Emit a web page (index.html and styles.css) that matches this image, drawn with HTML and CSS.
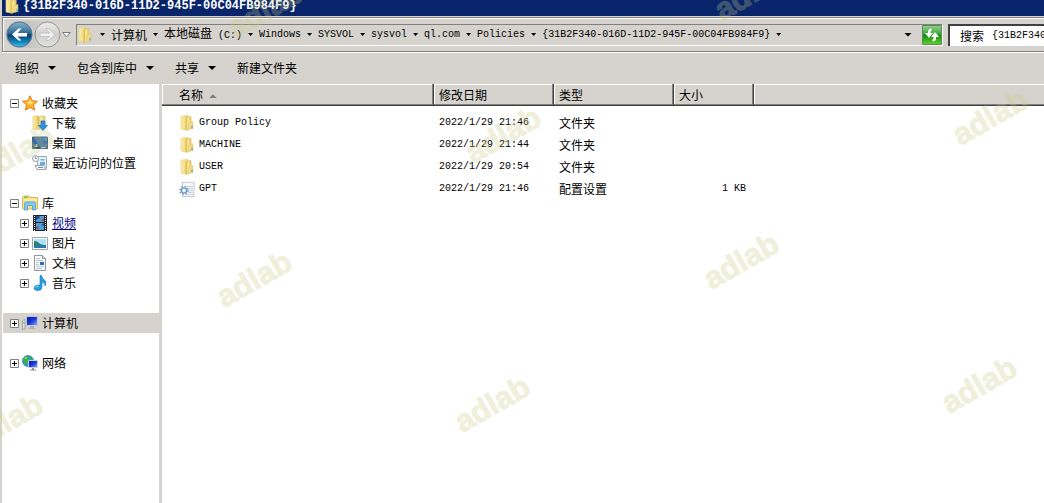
FILE: index.html
```html
<!DOCTYPE html>
<html lang="zh-CN">
<head>
<meta charset="utf-8">
<title>{31B2F340-016D-11D2-945F-00C04FB984F9}</title>
<link rel="stylesheet" href="styles.css">
</head>
<body>
<svg class="defs" aria-hidden="true">
  <defs>
    <linearGradient id="gFolder" x1="0" x2="1"><stop offset="0" stop-color="#fbefaa"/><stop offset="1" stop-color="#ecd06a"/></linearGradient>
    <linearGradient id="gFolder2" x1="0" x2="1"><stop offset="0" stop-color="#d9b548"/><stop offset=".4" stop-color="#fbeea6"/><stop offset="1" stop-color="#ead070"/></linearGradient>
    <linearGradient id="gBack" x1="0" x2="0" y1="0" y2="1"><stop offset="0" stop-color="#8ab4cc"/><stop offset=".45" stop-color="#2d6a94"/><stop offset=".52" stop-color="#0b3f6c"/><stop offset=".8" stop-color="#1484bd"/><stop offset="1" stop-color="#37c6f0"/></linearGradient>
    <linearGradient id="gFwd" x1="0" x2="0" y1="0" y2="1"><stop offset="0" stop-color="#eeeeee"/><stop offset=".5" stop-color="#cfcfcf"/><stop offset="1" stop-color="#e2e2e2"/></linearGradient>
    <linearGradient id="gGreen" x1="0" x2="0" y1="0" y2="1"><stop offset="0" stop-color="#8fd08a"/><stop offset=".45" stop-color="#3fa63b"/><stop offset=".5" stop-color="#118a10"/><stop offset="1" stop-color="#5fd52c"/></linearGradient>
    <linearGradient id="gScreen" x1="0" x2="1" y1="0" y2="1"><stop offset="0" stop-color="#0717a8"/><stop offset=".5" stop-color="#1638d8"/><stop offset="1" stop-color="#8fb4ff"/></linearGradient>
    <linearGradient id="gDesk" x1="0" x2="1" y1="1" y2="0"><stop offset="0" stop-color="#2c6cb8"/><stop offset=".6" stop-color="#3c6da4"/><stop offset="1" stop-color="#7fa8cf"/></linearGradient>
    <symbol id="folder" viewBox="0 0 16 16">
      <path d="M2 1.200 7 .5h2V13l-2 2-5-1z" fill="url(#gFolder)" stroke="#e8d27c" stroke-width=".6"/>
      <path d="M7 3 11.500 1.200V12L8 15.700l-1-.7z" fill="url(#gFolder2)" stroke="#d3ad48" stroke-width=".5"/>
      <path d="M9.500 8l4.500-1.500v7L9.500 14.700z" fill="#f3dc84" stroke="#dfc062" stroke-width=".5"/>
      <path d="M11.500 2v5" stroke="#e7cd70" stroke-width="2"/>
      <path d="M13 10.500v3" stroke="#3ea4dc"/>
    </symbol>
    <symbol id="star" viewBox="0 0 16 16">
      <path d="M8 .8l2.200 4.900 5.200.6-3.900 3.500 1.100 5.300L8 12.400l-4.600 2.700 1.100-5.300L.6 6.300l5.200-.6z" fill="#ffb22e" stroke="#e8730c"/>
      <path d="M8 3l1.400 3.500 3.600.5-5 2.500-4.500-2.500 3.200-.5z" fill="#ffdf7a"/>
    </symbol>
    <symbol id="download" viewBox="0 0 16 16">
      <path d="M1 1.500 6 .5v14l-5-.5z" fill="url(#gFolder)" stroke="#e0c368" stroke-width=".6"/>
      <path d="M6 2l5-1.300 2 1V13l-6 2z" fill="url(#gFolder2)" stroke="#d3ad48" stroke-width=".6"/>
      <path d="M9 6h4v4.500h2.500L11 15.500 6.500 10.500H9z" fill="#2f93e4" stroke="#1769b5" stroke-width=".7"/>
    </symbol>
    <symbol id="desktop" viewBox="0 0 16 16">
      <path d="M.5 2h15v11.500H.5z" fill="url(#gDesk)" stroke="#4b5f78"/>
      <path d="M1 12h14v1H1z" fill="#334b68"/><path d="M9 12h5v1H9z" fill="#a9c3de"/>
      <path d="M2.500 9H4v1.500H2.500z" fill="#e9622b"/><path d="M4 9h1.500v1.500H4z" fill="#82cf3a"/><path d="M2.500 10.500H4V12H2.500z" fill="#54b9f5"/><path d="M4 10.500h1.500V12H4z" fill="#ffd83d"/>
    </symbol>
    <symbol id="recent" viewBox="0 0 16 16">
      <path d="M5.500 1.500h9v12h-9z" fill="#e9eef2" stroke="#a2abb3"/>
      <path d="M8.500 4h4v1.500h-4zM8 7h5v3H8z" fill="#58b3e8"/>
      <path d="M3 10.500h9l2 4H5z" fill="#f4f6f8" stroke="#9aa3ab"/>
      <path d="M6 12.500h5" stroke="#7d868e"/>
      <circle cx="3.500" cy="3.500" r="3" fill="#fafcfd" stroke="#9299a1"/>
      <path d="M3.500 1.500v2H5" fill="none" stroke="#4e6b8a" stroke-width=".8"/>
    </symbol>
    <symbol id="library" viewBox="0 0 16 16">
      <path d="M.5 2.500 1.500 1H7l1 1.500h7.500V14H.5z" fill="#f6e08a" stroke="#dbb95c"/>
      <path d="M2 2.200h4" stroke="#43b548"/><path d="M1 5h14" stroke="#fff4bd"/>
      <path d="M2.500 8.500Q2.500 7 4 7h8q1.500 0 1.500 1.500V15h-3v-4.500h-5V15h-3z" fill="#82c9ef" stroke="#4a9ed2" stroke-width=".8"/>
    </symbol>
    <symbol id="video" viewBox="0 0 16 16">
      <path d="M1 0h14v16H1z" fill="#20262c"/>
      <path d="M4 1h8v6H4zM4 8h8v7H4z" fill="#4e9ed8"/>
      <path d="M4 1h3l1 2-4 2zM9 10l3-2v3z" fill="#284a91"/><path d="M9 5l3-2v3H9zM4 12l2-1 1 3H4z" fill="#b34b3e"/>
      <path d="M2.500 1v15M13.500 1v15" stroke="#eef2f4" stroke-dasharray="1 1"/>
    </symbol>
    <symbol id="picture" viewBox="0 0 16 16">
      <path d="M.5 2.500h15v12H.5z" fill="#fff" stroke="#9aa4ab"/>
      <path d="M2 4h12v9H2z" fill="#aee1f7"/><path d="M2 6q3 0 5 2t7 2v3H2z" fill="#24806f"/><path d="M2 10.500h12V13H2z" fill="#2c78b5"/>
    </symbol>
    <symbol id="document" viewBox="0 0 16 16">
      <path d="M2.500.5h8l3 3v12h-11z" fill="#fff" stroke="#8c97a4"/>
      <path d="M10.500.5v3h3" fill="#dce5ef" stroke="#8c97a4"/>
      <path d="M4 3.500h4M4 5.500h7M4 7.500h3M4 9.500h3M4 11.500h8M4 13.500h6" stroke="#b4c2d5"/>
      <path d="M8 7h4v3H8z" fill="#2c68c4"/>
    </symbol>
    <symbol id="music" viewBox="0 0 16 16">
      <path d="M8 .5h1.500q.5 3 3 4.500 2.500 2 .5 6 .3-3-3-4V12q0 3.500-4 3.500-4 0-4-2.500 0-3 6-3z" fill="#279de2" stroke="#1377bd" stroke-width=".6"/>
      <path d="M3.500 12.500q1-1.200 3-1" fill="none" stroke="#95dcfa"/>
    </symbol>
    <symbol id="computer" viewBox="0 0 16 16">
      <path d="M.5 5.500 3 4.500V14l-2.500.5z" fill="#e6e6e2" stroke="#8a8a86" stroke-width=".7"/><path d="M1 8h1.500" stroke="#43c23b"/>
      <path d="M4.500 1.500h11v9h-11z" fill="url(#gScreen)" stroke="#c8c8d2"/>
      <path d="M8 11h4v1.500l2 1.500H6l2-1.500z" fill="#aeb0b4"/>
    </symbol>
    <symbol id="network" viewBox="0 0 16 16">
      <circle cx="6" cy="6" r="5.500" fill="#2c9ce0" stroke="#1663a6" stroke-width=".6"/>
      <path d="M1 4q2-3 5-3l1 2-2 2 1 2-3 3-1-3zM8 1l3 3-2 2-1-2z" fill="#37b52e"/><path d="M3 3.500 5 2.500" stroke="#dff7c0"/>
      <path d="M6.500 5.500h9v7h-9z" fill="url(#gScreen)" stroke="#c8cfe0"/>
      <path d="M10 13h2v1.500h2v1H8v-1h2z" fill="#8b9199"/>
    </symbol>
    <symbol id="config" viewBox="0 0 16 16">
      <path d="M3.500 1v14.500h11.500V1l-1.500 1L12 1l-1.500 1L9 1 7.500 2 6 1 5 2z" fill="#fafbfc" stroke="#b4bac4" stroke-width=".8"/>
      <path d="M7 5.500h7M9 7.500h5M9 9.500h5M9 11.500h5M7 13.500h7" stroke="#c6cfdc"/>
      <circle cx="5" cy="9.500" r="4" fill="none" stroke="#7ba3c7" stroke-width="1.600" stroke-dasharray="1.600 1.540"/>
      <circle cx="5" cy="9.500" r="2.600" fill="#eef5fa" stroke="#6c99c1" stroke-width="1.400"/>
    </symbol>
    <symbol id="plus" viewBox="0 0 9 9"><path d="M.5.5h8v8h-8z" fill="#fff" stroke="#808080"/><path d="M2 4.500h5M4.500 2v5" stroke="#000"/></symbol>
    <symbol id="minus" viewBox="0 0 9 9"><path d="M.5.5h8v8h-8z" fill="#fff" stroke="#808080"/><path d="M2 4.500h5" stroke="#000"/></symbol>
  </defs>
</svg>

<div class="window">
  <header class="titlebar">
    <svg class="icon"><use href="#folder"/></svg>
    <h1 class="title">{31B2F340-016D-11D2-945F-00C04FB984F9}</h1>
  </header>

  <div class="navbar">
    <div class="history">
      <div class="pair">
        <button class="plain" aria-label="后退"><svg width="27" height="27" viewBox="0 0 27 27"><circle cx="13.500" cy="13.500" r="12.500" fill="url(#gBack)" stroke="#56718a"/><path d="M6 13.500 12.500 7.500h3L11.500 12H21v3.500h-9.500l4 4h-3z" fill="#fff"/></svg></button>
        <button class="plain" aria-label="前进"><svg width="27" height="27" viewBox="0 0 27 27"><circle cx="13.500" cy="13.500" r="12.500" fill="url(#gFwd)" stroke="#939393"/><path d="M21 13.500 14.500 7.500h-3L15.500 12H6v3.500h9.500l-4 4h3z" fill="#efefef" stroke="#b9b9b9" stroke-width=".7"/></svg></button>
      </div>
      <button class="plain" aria-label="最近的页面"><svg width="9" height="6" viewBox="0 0 9 6"><path d="M.8.5h7.400L4.500 5z" fill="#fff" stroke="#777b88"/></svg></button>
    </div>
    <nav class="address" aria-label="地址">
      <svg class="icon"><use href="#folder"/></svg>
      <ol class="crumbs">
        <li></li>
        <li><a href="#">计算机</a></li>
        <li><a href="#">本地磁盘<span class="latin">&nbsp;(C:)</span></a></li>
        <li><a href="#" class="latin">Windows</a></li>
        <li><a href="#" class="latin">SYSVOL</a></li>
        <li><a href="#" class="latin">sysvol</a></li>
        <li><a href="#" class="latin">ql.com</a></li>
        <li><a href="#" class="latin">Policies</a></li>
        <li><a href="#" class="latin">{31B2F340-016D-11D2-945F-00C04FB984F9}</a></li>
      </ol>
      <button class="plain history-drop" aria-label="以前的位置"><i class="arrow"></i></button>
      <button class="plain" aria-label="刷新"><svg width="20" height="20" viewBox="0 0 20 20"><path d="M.5.500h19v19H.5z" fill="url(#gGreen)" stroke="#5d8c58"/><path d="M9 3.500Q5.500 4 6 8H3l4 5 4-5H8.500Q8 5.500 10 5z" fill="#fff"/><path d="M11 16.500q3.500-.5 3-4.500h3l-4-5-4 5h2.500q.5 2.500-1.500 3z" fill="#fff"/></svg></button>
    </nav>
    <div class="search">
      <label for="q">搜索</label>
      <input id="q" class="latin" type="text" value="{31B2F340-016D-11D2-945F-00C04FB984F9}">
    </div>
  </div>

  <div class="toolbar">
    <button class="plain">组织<i class="arrow"></i></button>
    <button class="plain">包含到库中<i class="arrow"></i></button>
    <button class="plain">共享<i class="arrow"></i></button>
    <button class="plain">新建文件夹</button>
  </div>

  <div class="content">
    <aside class="sidebar">
      <ul class="group">
        <li class="node"><svg class="box"><use href="#minus"/></svg><svg class="icon"><use href="#star"/></svg><a href="#">收藏夹</a></li>
        <li class="node child"><i class="box"></i><svg class="icon"><use href="#download"/></svg><a href="#">下载</a></li>
        <li class="node child"><i class="box"></i><svg class="icon"><use href="#desktop"/></svg><a href="#">桌面</a></li>
        <li class="node child"><i class="box"></i><svg class="icon"><use href="#recent"/></svg><a href="#">最近访问的位置</a></li>
      </ul>
      <ul class="group">
        <li class="node"><svg class="box"><use href="#minus"/></svg><svg class="icon"><use href="#library"/></svg><a href="#">库</a></li>
        <li class="node child"><svg class="box"><use href="#plus"/></svg><svg class="icon"><use href="#video"/></svg><a href="#" class="hot">视频</a></li>
        <li class="node child"><svg class="box"><use href="#plus"/></svg><svg class="icon"><use href="#picture"/></svg><a href="#">图片</a></li>
        <li class="node child"><svg class="box"><use href="#plus"/></svg><svg class="icon"><use href="#document"/></svg><a href="#">文档</a></li>
        <li class="node child"><svg class="box"><use href="#plus"/></svg><svg class="icon"><use href="#music"/></svg><a href="#">音乐</a></li>
      </ul>
      <ul class="group">
        <li class="node selected"><svg class="box"><use href="#plus"/></svg><svg class="icon"><use href="#computer"/></svg><a href="#">计算机</a></li>
      </ul>
      <ul class="group">
        <li class="node"><svg class="box"><use href="#plus"/></svg><svg class="icon"><use href="#network"/></svg><a href="#">网络</a></li>
      </ul>
    </aside>

    <main class="list">
      <table class="files">
        <colgroup><col class="c-name"><col class="c-date"><col class="c-type"><col class="c-size"><col></colgroup>
        <thead>
          <tr><th class="name">名称<i class="sort"></i></th><th>修改日期</th><th>类型</th><th>大小</th><th class="rest"></th></tr>
        </thead>
        <tbody>
          <tr><td class="name"><span class="file"><svg class="icon"><use href="#folder"/></svg><span class="latin">Group Policy</span></span></td><td class="latin">2022/1/29 21:46</td><td>文件夹</td><td></td><td></td></tr>
          <tr><td class="name"><span class="file"><svg class="icon"><use href="#folder"/></svg><span class="latin">MACHINE</span></span></td><td class="latin">2022/1/29 21:44</td><td>文件夹</td><td></td><td></td></tr>
          <tr><td class="name"><span class="file"><svg class="icon"><use href="#folder"/></svg><span class="latin">USER</span></span></td><td class="latin">2022/1/29 20:54</td><td>文件夹</td><td></td><td></td></tr>
          <tr><td class="name"><span class="file"><svg class="icon"><use href="#config"/></svg><span class="latin">GPT</span></span></td><td class="latin">2022/1/29 21:46</td><td>配置设置</td><td class="latin size">1 KB</td><td></td></tr>
        </tbody>
      </table>
    </main>
  </div>

  <div class="marks" aria-hidden="true">
    <span class="mark m1">adlab</span><span class="mark m2">adlab</span><span class="mark m3">adlab</span>
    <span class="mark m4">adlab</span><span class="mark m5">adlab</span><span class="mark m6">adlab</span>
    <span class="mark m7">adlab</span><span class="mark m8">adlab</span><span class="mark m9">adlab</span>
    <span class="mark m10">adlab</span>
  </div>
</div>
</body>
</html>
```

FILE: styles.css
```css
* { box-sizing: border-box; }

:root {
  --face: #d6d3ce;
  --shade: #808080;
  --dark: #404040;
}

body {
  margin: 0;
  background: var(--face);
  color: #000;
  font: 12px/20px "Noto Sans CJK SC", sans-serif;
}

.defs { position: absolute; width: 0; height: 0; }

.latin { font-family: "Liberation Mono", "Noto Sans CJK SC", monospace; font-size: 10px; }

.icon { display: block; flex: none; width: 16px; height: 16px; }

a { color: inherit; text-decoration: none; }

ul, ol { margin: 0; padding: 0; list-style: none; }

.plain {
  display: flex;
  align-items: center;
  padding: 0;
  border: 0;
  background: none;
  color: inherit;
  font: inherit;
}

.arrow {
  width: 8px;
  height: 4px;
  background: #000;
  clip-path: polygon(0 0, 100% 0, 50% 100%);
}

.window {
  position: relative;
  display: flex;
  flex-direction: column;
  min-height: 100vh;
  overflow: hidden;
}

.titlebar {
  display: flex;
  align-items: center;
  gap: 3px;
  height: 16px;
  margin-left: 2px;
  padding: 0 2px 4px;
  background: #08246b;
  color: #fff;
}

.title { margin: 0; font: bold 12px/14px "Liberation Mono", monospace; }

.navbar {
  display: flex;
  align-items: center;
  gap: 5px;
  margin: 1px 0 0 2px;
  padding: 3px 0 3px 3px;
  border: solid var(--shade);
  border-width: 1px 0 1px 1px;
  box-shadow: inset 1px 1px #fff, 0 1px #fff;
}

.history { display: flex; align-items: center; gap: 1px; }

.pair {
  display: flex;
  gap: 1px;
  border-radius: 14px;
  background: linear-gradient(90deg, #b4b4b2, #dedcd8);
}

.address {
  display: flex;
  flex: 1;
  align-items: center;
  min-width: 0;
  height: 22px;
  border: 1px solid;
  border-color: var(--shade) #fff #fff var(--shade);
}

.crumbs { display: flex; flex: 1; min-width: 0; white-space: nowrap; overflow: hidden; }

.crumbs li { display: flex; align-items: center; }

.crumbs li::after {
  content: "";
  width: 5px;
  height: 3px;
  margin: 0 6px;
  background: #000;
  clip-path: polygon(0 0, 100% 0, 50% 100%);
}

.crumbs li:first-child { padding-left: 1px; }

.history-drop { padding: 0 10px; }

.search {
  display: flex;
  flex: none;
  align-items: center;
  gap: 8px;
  width: 96px;
  height: 22px;
  padding-left: 10px;
  border: solid var(--dark);
  border-width: 2px 0 0 2px;
  background: #fff;
}

.search label { flex: none; }

.search input {
  flex: 1;
  min-width: 0;
  padding: 0;
  border: 0;
  outline: 0;
  background: none;
}

.toolbar {
  display: flex;
  gap: 21px;
  height: 32px;
  padding-left: 15px;
}

.toolbar .plain { gap: 9px; }

.content { display: flex; flex: 1; }

.sidebar {
  display: flex;
  flex: none;
  flex-direction: column;
  gap: 20px;
  width: 162px;
  padding-top: 9px;
  border: solid var(--face);
  border-width: 0 3px 0 2px;
  background: #fff;
}

.node {
  display: flex;
  align-items: center;
  height: 20px;
  margin-left: 1px;
  padding-left: 7px;
}

.node.child { padding-left: 17px; }

.node.selected { background: var(--face); }

.node .icon { margin: 0 4px 0 3px; }

.box { flex: none; width: 9px; height: 9px; }

.hot { color: #00007f; text-decoration: underline; }

.list { flex: 1; min-width: 0; background: #fff; }

.files {
  width: 100%;
  border-collapse: separate;
  border-spacing: 0;
  table-layout: fixed;
}

.c-name { width: 272px; }
.c-date, .c-type { width: 120px; }
.c-size { width: 80px; }

th {
  height: 22px;
  padding: 0 5px;
  border: solid var(--dark);
  border-width: 0 1px 1px 0;
  background: var(--face);
  box-shadow: inset -1px -1px var(--shade), inset 1px 1px #fff;
  font-weight: normal;
  line-height: 20px;
  text-align: left;
}

th.name { padding-left: 17px; }

th.rest { border-right: 0; box-shadow: inset 0 -1px var(--shade), inset 1px 1px #fff; }

.sort {
  display: inline-block;
  width: 8px;
  height: 4px;
  margin-left: 6px;
  background: var(--shade);
  clip-path: polygon(50% 0, 100% 100%, 0 100%);
  vertical-align: middle;
}

td { height: 22px; padding: 0 5px; }

td.name { padding-left: 17px; }

td.size { padding-right: 8px; text-align: right; }

tbody::before { content: ""; display: block; height: 6px; }

.file { display: flex; align-items: center; gap: 4px; }

.marks { position: absolute; inset: 0; overflow: hidden; opacity: .28; pointer-events: none; }

.mark {
  position: absolute;
  color: #c8cd82;
  font: bold 31px/31px "Liberation Sans", sans-serif;
  -webkit-text-stroke: 1px #c8cd82;
  transform: translate(-50%, -50%) rotate(-30deg);
}

.m1 { left: 265px; top: 10px; }
.m2 { left: 752px; top: -8px; }
.m3 { left: 16px; top: 153px; }
.m4 { left: 503px; top: 135px; }
.m5 { left: 990px; top: 117px; }
.m6 { left: 254px; top: 279px; }
.m7 { left: 741px; top: 261px; }
.m8 { left: 492px; top: 404px; }
.m9 { left: 979px; top: 385px; }
.m10 { left: 5px; top: 422px; }
```
